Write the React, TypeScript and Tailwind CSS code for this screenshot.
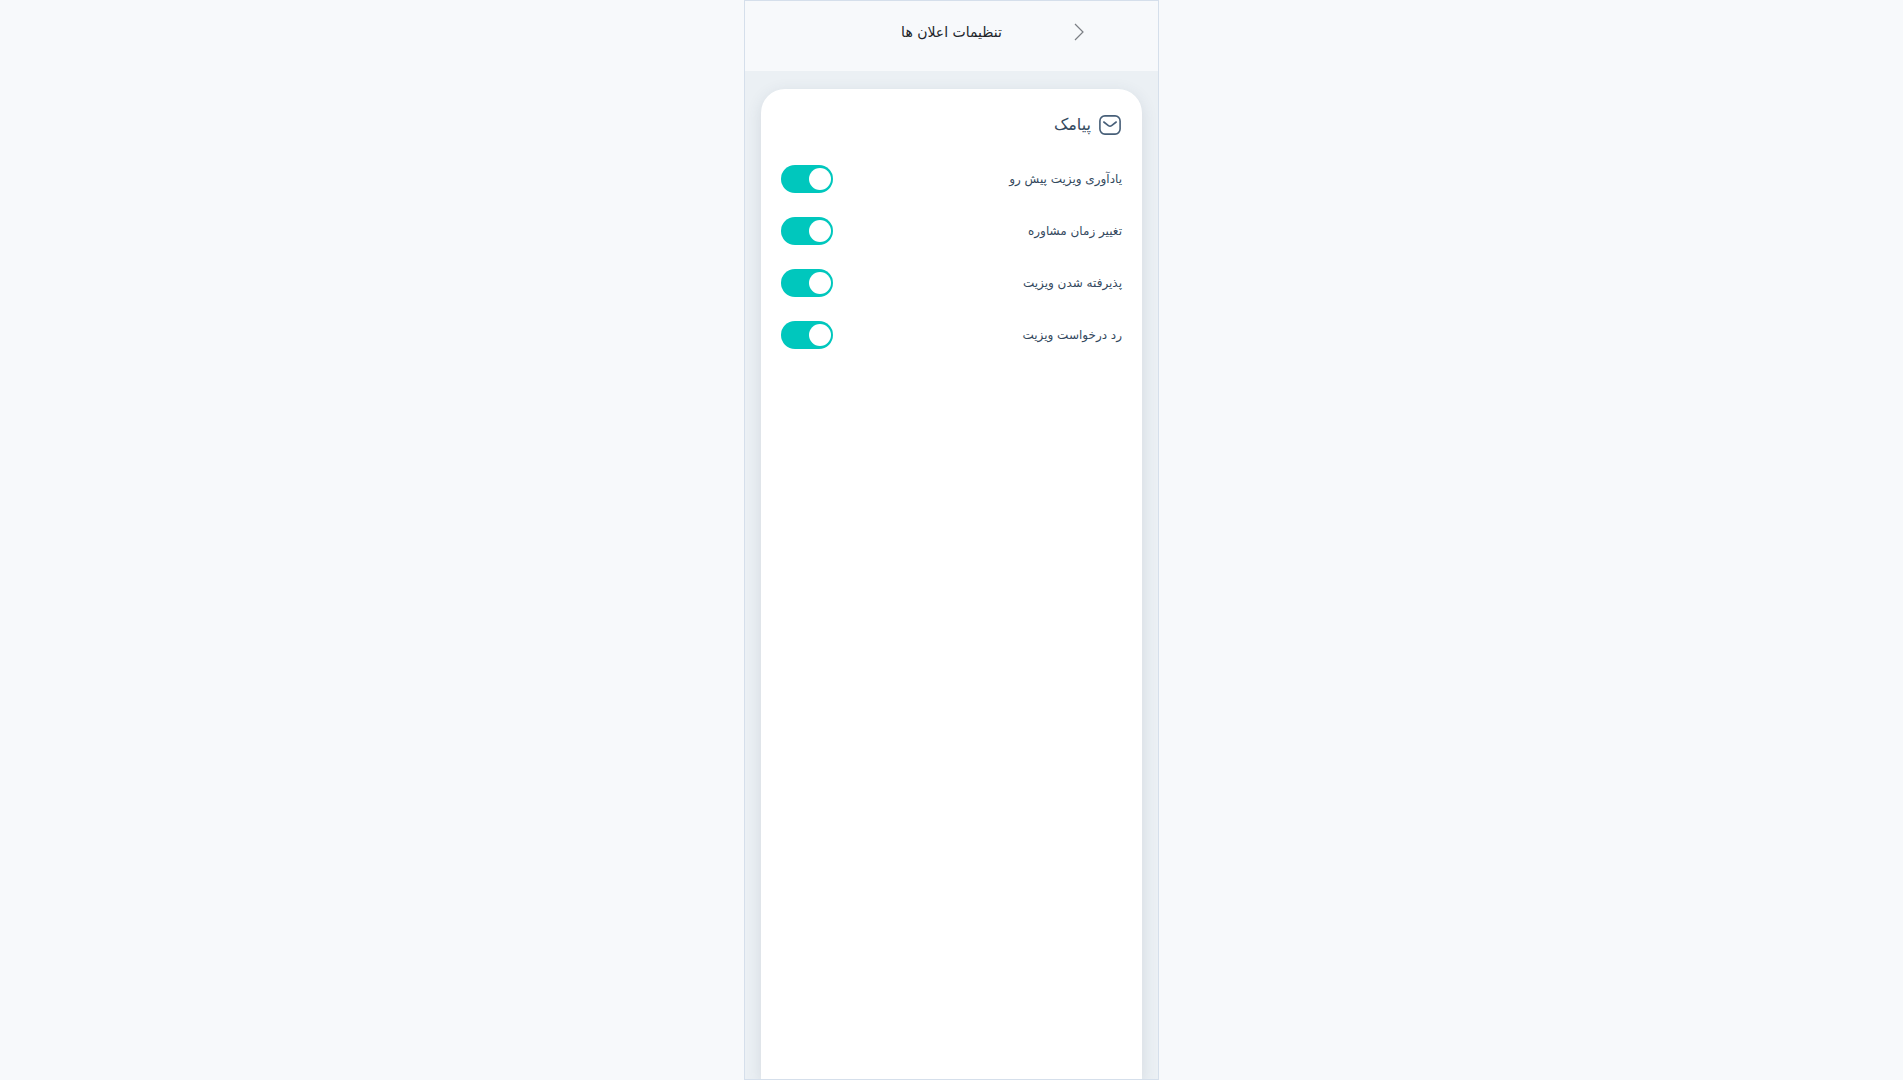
import { useState } from "react";

const options = [
  { id: "upcoming", label: "یادآوری ویزیت پیش رو" },
  { id: "reschedule", label: "تغییر زمان مشاوره" },
  { id: "accepted", label: "پذیرفته شدن ویزیت" },
  { id: "rejected", label: "رد درخواست ویزیت" },
];

function BackIcon() {
  return (
    <svg viewBox="0 0 10 18" className="h-[18px] w-[10px]" fill="none" stroke="#7b7f84" strokeWidth="1.2" aria-hidden="true">
      <path d="M1 1 L9 9 L1 17" />
    </svg>
  );
}

function MailIcon() {
  return (
    <svg viewBox="0 0 22 20" className="h-5 w-[22px]" fill="none" stroke="#475f78" strokeWidth="1.6" strokeLinecap="round" strokeLinejoin="round" aria-hidden="true">
      <rect x="0.9" y="0.9" width="20.2" height="18.2" rx="5" />
      <path d="M4.8 7 L9.4 10.6 Q11 11.8 12.6 10.6 L17.2 7" />
    </svg>
  );
}

function Toggle({ id, label }: { id: string; label: string }) {
  const [on, setOn] = useState(true);
  return (
    <li className="flex h-7 items-center justify-between">
      <label htmlFor={id} className="text-xs text-[#34495e]">
        {label}
      </label>
      <input
        id={id}
        type="checkbox"
        role="switch"
        checked={on}
        onChange={() => setOn(!on)}
        className="h-7 w-[52px] cursor-pointer appearance-none rounded-full bg-gray-300 px-[2px] py-[3px] [direction:ltr] before:block before:size-[22px] before:rounded-full before:bg-white checked:bg-[#00c7bd] checked:before:ml-[26px]"
      />
    </li>
  );
}

export default function App() {
  return (
    <div dir="rtl" className="flex min-h-screen justify-center bg-[#f7f9fb] font-['DejaVu_Sans',sans-serif]">
      <main className="flex w-full max-w-[415px] flex-col border border-[#d5dfeb] bg-[#ebf0f4]">
        <header className="grid h-[70px] grid-cols-[1fr_auto_1fr] items-start bg-[#f7f9fb] px-[74px] pt-[19px]">
          <button type="button" aria-label="بازگشت" className="flex h-6 cursor-pointer items-center justify-self-start">
            <BackIcon />
          </button>
          <h1 className="text-sm leading-6 text-[#212529]">تنظیمات اعلان ها</h1>
        </header>
        <section className="mx-4 mt-[18px] flex-1 rounded-t-3xl bg-white px-5 pt-6 shadow-[0_4px_16px_rgba(52,73,94,0.13)] [clip-path:inset(-18px_-16px_0)]">
          <div className="flex h-6 items-center gap-2 ps-px">
            <MailIcon />
            <h2 className="text-base leading-6 text-[#34495e]">پیامک</h2>
          </div>
          <ul className="mt-7 flex flex-col gap-6">
            {options.map((option) => (
              <Toggle key={option.id} id={option.id} label={option.label} />
            ))}
          </ul>
        </section>
      </main>
    </div>
  );
}
